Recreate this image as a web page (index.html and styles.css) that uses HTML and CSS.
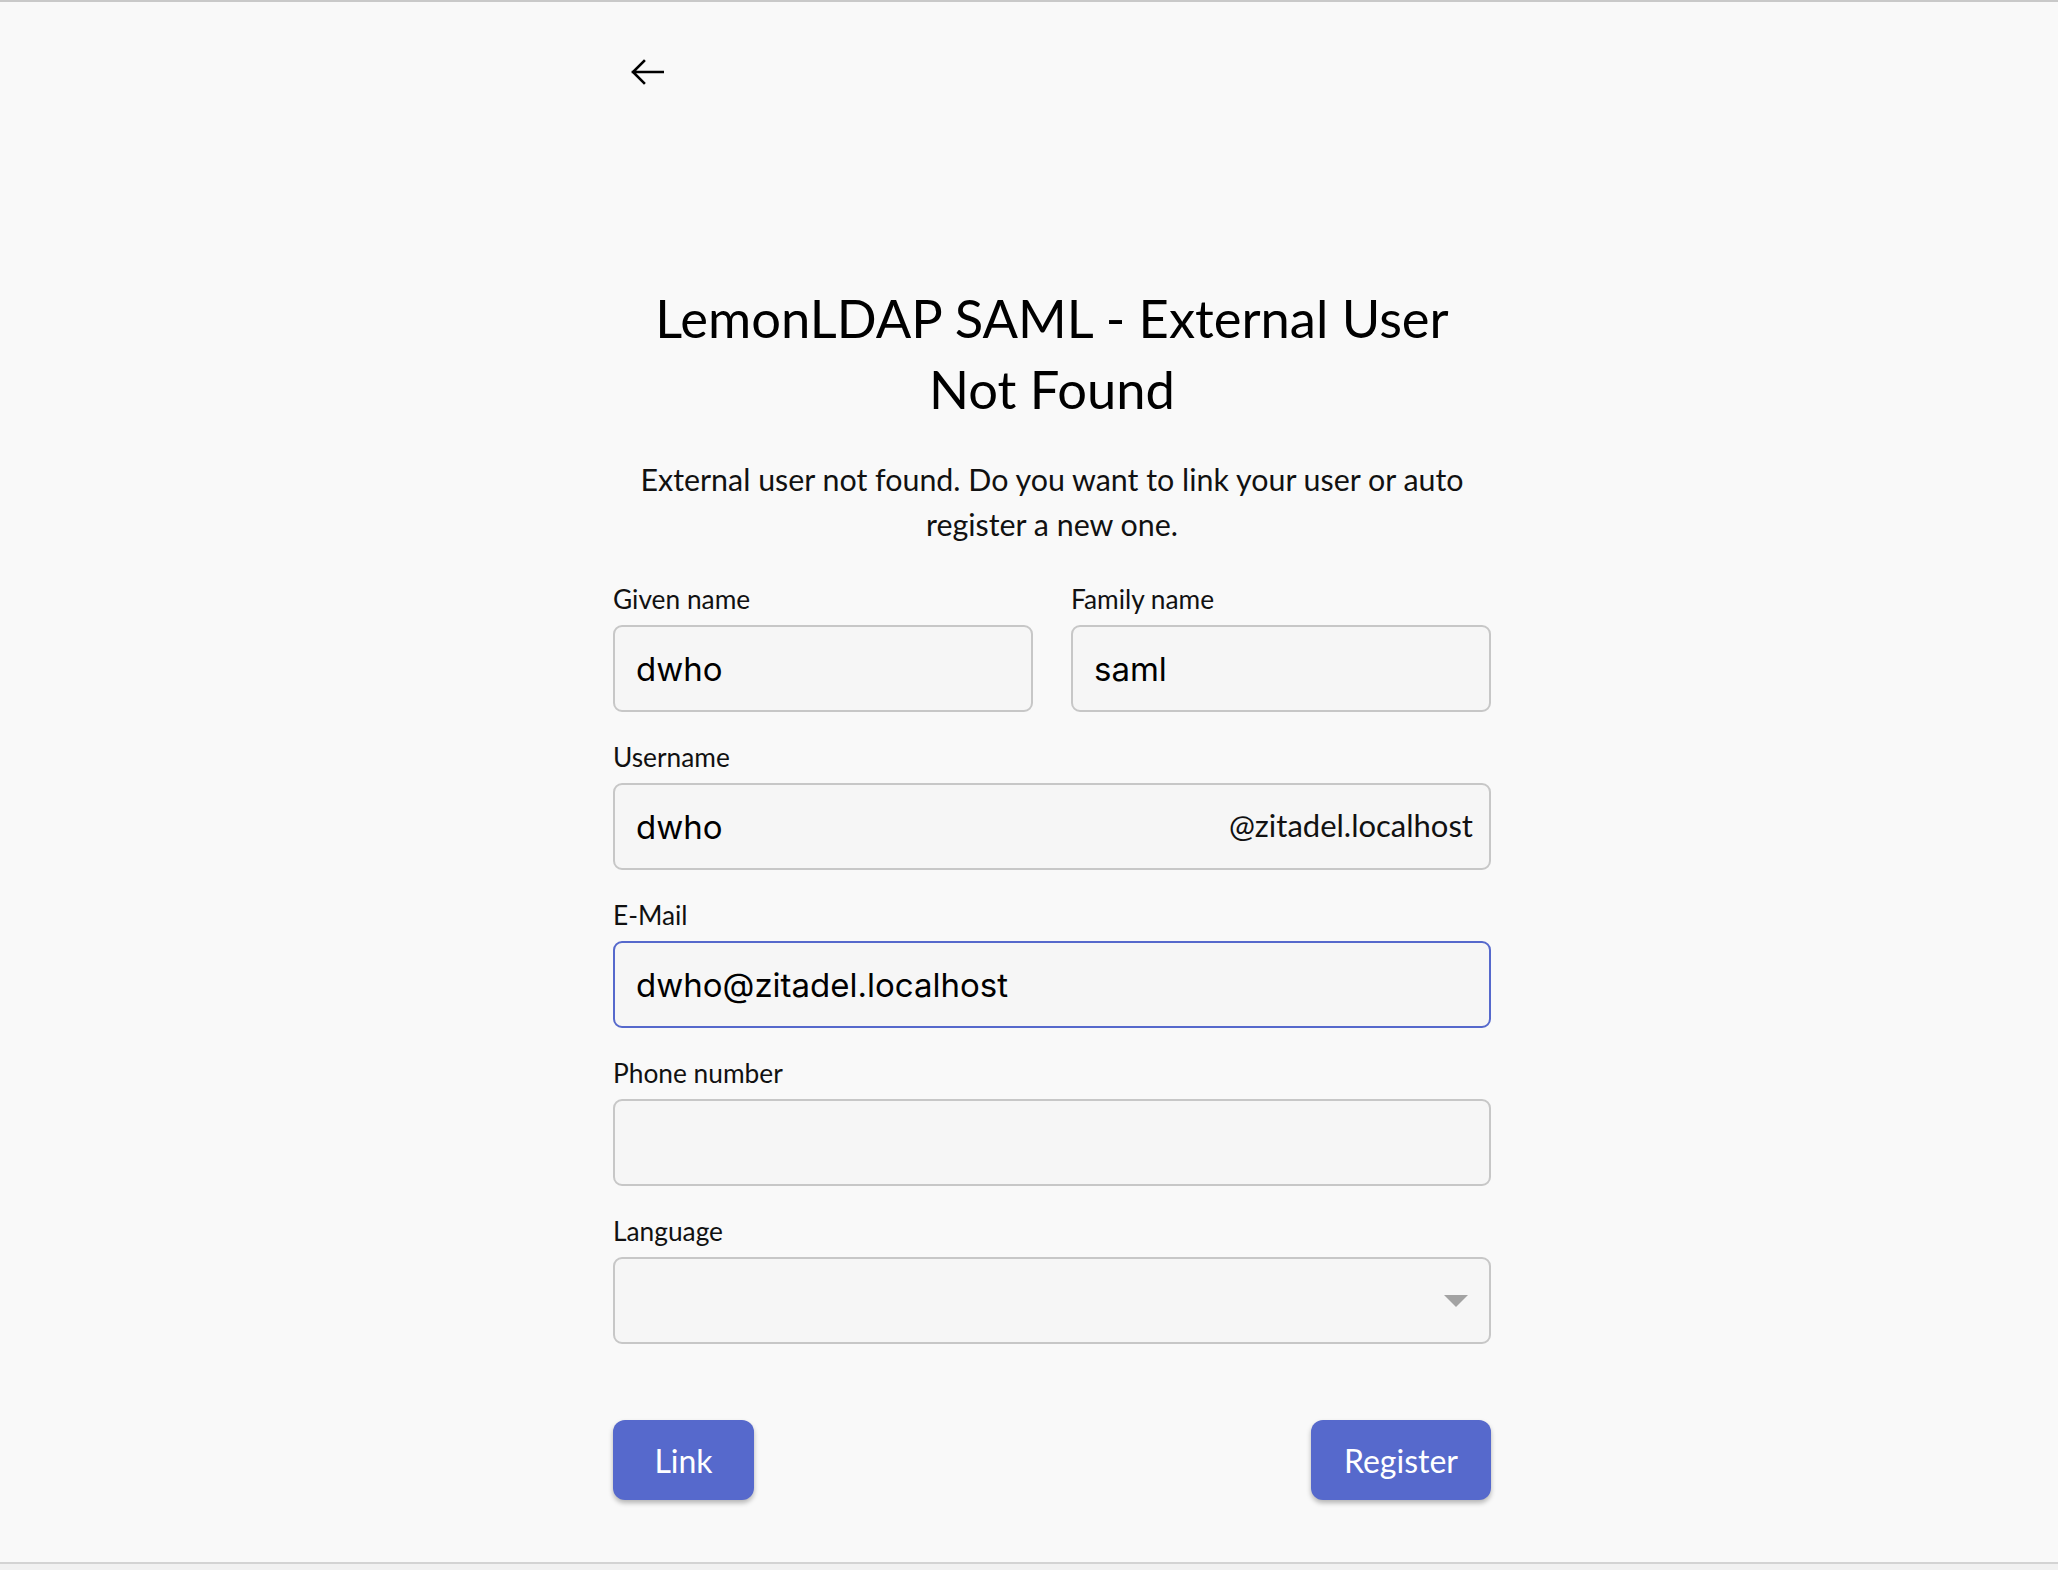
FILE: index.html
```html
<!DOCTYPE html>
<html lang="en">
<head>
<meta charset="utf-8">
<title>LemonLDAP SAML - External User Not Found</title>
<link rel="stylesheet" href="styles.css">
</head>
<body>
<div class="frame">
  <main class="main">
    <header class="header">
      <button class="back" type="button" aria-label="Back">
        <svg width="34" height="26" viewBox="0 0 34 26" aria-hidden="true">
          <path d="M33 13H3M14 2L3 13l11 11" fill="none" stroke="#000" stroke-width="2.6" stroke-linecap="square" stroke-linejoin="miter"/>
        </svg>
      </button>
    </header>

    <h1 class="title">LemonLDAP SAML - External User Not Found</h1>
    <p class="desc">External user not found. Do you want to link your user or auto register a new one.</p>

    <form class="form">
      <div class="row">
        <div class="field">
          <label class="label">Given name</label>
          <div class="input"><span class="value">dwho</span></div>
        </div>
        <div class="field">
          <label class="label">Family name</label>
          <div class="input"><span class="value">saml</span></div>
        </div>
      </div>

      <div class="field">
        <label class="label">Username</label>
        <div class="input input-suffix"><span class="value">dwho</span><span class="suffix">@zitadel.localhost</span></div>
      </div>

      <div class="field">
        <label class="label">E-Mail</label>
        <div class="input input-focus"><span class="value">dwho@zitadel.localhost</span></div>
      </div>

      <div class="field">
        <label class="label">Phone number</label>
        <div class="input"></div>
      </div>

      <div class="field field-last">
        <label class="label">Language</label>
        <div class="input input-select"><span class="caret"></span></div>
      </div>

      <div class="actions">
        <button class="btn" type="button">Link</button>
        <button class="btn" type="button">Register</button>
      </div>
    </form>
  </main>
</div>
</body>
</html>
```

FILE: styles.css
```css
* { box-sizing: border-box; }

html {
  background: #f1f1f1;
}

body {
  margin: 0;
  font-family: Lato, "Open Sans", sans-serif;
  color: #000;
}

.frame {
  height: 1564px;
  background: #f9f9f9;
  border-top: 2px solid #c9c9c9;
  border-bottom: 2px solid #d3d3d3;
}

.main {
  width: 924px;
  margin: 0 auto;
  padding-left: 46px;
}

.header {
  padding-top: 46px;
  height: 94px;
}

.back {
  width: 48px;
  height: 48px;
  margin-left: 10px;
  padding: 0;
  border: 0;
  background: transparent;
  display: flex;
  align-items: center;
  justify-content: center;
}

.title {
  margin: 186px 0 0;
  font-size: 52.5px;
  line-height: 71px;
  font-weight: 400;
  text-align: center;
  color: #000;
}

.desc {
  margin: 33px 0 0;
  font-size: 30.4px;
  line-height: 45px;
  text-align: center;
  color: #111;
}

.form {
  margin-top: 37px;
}

.row {
  display: grid;
  grid-template-columns: 1fr 1fr;
  column-gap: 38px;
}

.field {
  display: flex;
  flex-direction: column;
  margin-bottom: 30px;
}

.field-last {
  margin-bottom: 76px;
}

.label {
  font-size: 26.3px;
  line-height: 30px;
  margin-bottom: 11px;
  color: #111;
}

.input {
  height: 87px;
  border: 2px solid #c7c7c7;
  border-radius: 9px;
  background: #f6f6f6;
  padding: 0 16px 0 21px;
  display: flex;
  align-items: center;
}

.input-focus {
  border-color: #5669cc;
}

.value {
  font-family: Inter, "Liberation Sans", sans-serif;
  font-size: 33px;
  color: #000;
}

.input-suffix {
  justify-content: space-between;
}

.suffix {
  font-size: 31px;
  color: #111;
  margin-top: -4px;
}

.input-select {
  justify-content: flex-end;
  padding-right: 21px;
}

.caret {
  width: 0;
  height: 0;
  border-left: 12px solid transparent;
  border-right: 12px solid transparent;
  border-top: 12px solid #a3a3a3;
}

.actions {
  display: flex;
  justify-content: space-between;
}

.btn {
  height: 80px;
  min-width: 141px;
  padding: 0 33px;
  border: 0;
  border-radius: 12px;
  background: #5669cc;
  color: #fff;
  font-family: Lato, "Open Sans", sans-serif;
  font-size: 32px;
  box-shadow: 0 3px 5px rgba(0, 0, 0, 0.28);
}
```
